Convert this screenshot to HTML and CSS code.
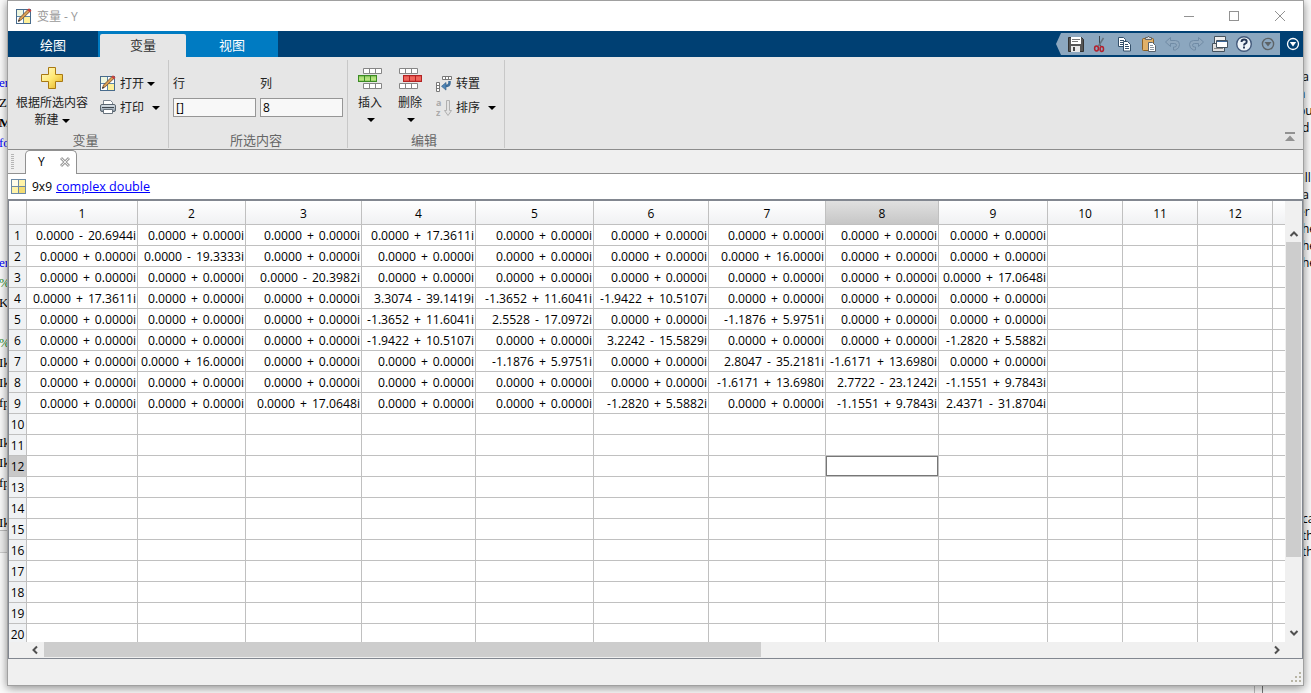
FILE: index.html
```html
<!DOCTYPE html>
<html lang="zh-CN">
<head>
  <meta charset="UTF-8">
  <title>变量 - Y</title>
  <link rel="stylesheet" href="styles.css">
</head>
<body>

  <!-- shared icons -->
  <svg class="defs" width="0" height="0">
    <defs>
      <linearGradient id="gold" x1="0" y1="0" x2="1" y2="1">
        <stop offset="0" stop-color="#fffbd0"/><stop offset="0.5" stop-color="#ffe873"/><stop offset="1" stop-color="#dfa91c"/>
      </linearGradient>
      <linearGradient id="green" x1="0" y1="0" x2="0" y2="1">
        <stop offset="0" stop-color="#9fd36d"/><stop offset="1" stop-color="#c4ef8a"/>
      </linearGradient>
      <linearGradient id="metal" x1="0" y1="0" x2="0" y2="1">
        <stop offset="0" stop-color="#dfe7ee"/><stop offset="1" stop-color="#8795a2"/>
      </linearGradient>
      <symbol id="edit" viewBox="0 0 16 16">
        <rect x="0.5" y="1.5" width="14" height="14" fill="#fff" stroke="#486b8c"/>
        <rect x="8" y="9" width="6" height="6" fill="#fff099"/>
        <rect x="1" y="2" width="6" height="6" fill="#eef6df"/>
        <path d="M7.5 2v13M1 8.5h13" stroke="#5c86a8"/>
        <path d="M2.500 13.200l1-3.200L12 1.500l2 1.900-8.700 8.400z" fill="#d9a054" stroke="#6b4423" stroke-width="0.8"/>
        <path d="M11.400 2l1.600-1.700 2.500 2.400L13.900 4.300z" fill="#c9423f"/>
        <path d="M2 13.800l.8-2 1.400 1.300z" fill="#222"/>
      </symbol>
      <symbol id="cells" viewBox="0 0 19 6" preserveAspectRatio="none">
        <path d="M.5.5h18v5H.5z"/><path d="M6.500 0v6M12.500 0v6" fill="none"/>
      </symbol>
    </defs>
  </svg>

  <div class="code">
    <p class="blue">er</p><p>Z=</p><p><b>M</b>=</p><p class="blue">fo</p><p></p><p></p><p></p><p></p><p></p>
    <p class="blue">er</p><p class="green">%2</p><p>K=</p><p></p><p class="green">%</p><p>Ik</p><p>Ik</p><p>fp</p><p></p><p>Ik</p><p>Ik</p><p>fp</p><p></p><p>Ik</p>
    <div class="code-end"></div>
  </div>
  <div class="notes">
    <p>ta</p><p>n</p><p>bu</p><p class="in">d</p><p></p><p></p><p>all</p><p>ta</p><p>er</p><p class="in">he</p><p class="in">he</p><p class="in">he</p>
    <div class="notes-gap"></div>
    <p class="in">ca</p><p class="in">th</p><p class="in">th</p>
  </div>
  <div class="split"></div>

  <div class="window">
    <div class="titlebar">
      <svg width="16" height="16"><use href="#edit"/></svg>
      <span class="title">变量 - Y</span>
      <svg class="caption" width="104" height="14" fill="none" stroke="#929292">
        <path d="M1 7.500h10"/><rect x="46.500" y="2.500" width="9" height="9"/><path d="M92 2l10 10M102 2l-10 10"/>
      </svg>
    </div>

    <div class="tabs">
      <div class="tab">绘图</div>
      <div class="tab-blue">
        <div class="tab active">变量</div>
        <div class="tab view">视图</div>
      </div>
      <div class="quick">
        <svg width="224" height="22" viewBox="0 0 224 22">
          <path d="M5 0h219v22H5L0 11z" fill="#8ca7bf"/>
          <!-- save -->
          <g transform="translate(12,3)">
            <path d="M.5 1.500h13l2 2v12H.5z" fill="#555" stroke="#333"/>
            <rect x="3" y="1" width="10" height="7" fill="#fff"/><path d="M4 3.500h8M4 5.500h6" stroke="#777"/>
            <rect x="3" y="10" width="9" height="6" fill="#e8e8e8"/><rect x="5" y="11" width="2" height="4" fill="#444"/>
          </g>
          <!-- cut -->
          <g transform="translate(36,3)" fill="none">
            <path d="M7.500 0v8l1 2" stroke="#3c4750"/><path d="M11.500 2l-5 8" stroke="#66737e" stroke-width="1.500"/>
            <ellipse cx="4.500" cy="12.500" rx="1.900" ry="2.500" stroke="#b3202d" stroke-width="1.500"/>
            <ellipse cx="9.800" cy="13" rx="1.700" ry="2.500" stroke="#b3202d" stroke-width="1.500"/>
          </g>
          <!-- copy -->
          <g transform="translate(61,3)" stroke="#34506b">
            <path d="M1.500 1.500h5l2 2v7h-7z" fill="#fff"/><path d="M3 4.500h4M3 6.500h4M3 8.500h4"/>
            <path d="M6.500 5.500h4l3 3v6.500h-7z" fill="#fff"/><path d="M8 8.500h3M8 10.500h4M8 12.500h4"/>
          </g>
          <!-- paste -->
          <g transform="translate(85,3)">
            <rect x="1.500" y="2.500" width="11" height="12" rx="1" fill="#e0b169" stroke="#8c6124"/>
            <path d="M4.500 3.500v-2h2l.5-1h1l.5 1h2v2z" fill="#ddd" stroke="#666"/>
            <path d="M7.500 6.500h4l3 3v6h-7z" fill="#fff" stroke="#58636e"/><path d="M9 9.500h3M9 11.500h4M9 13.500h4" stroke="#8b96a2"/>
          </g>
          <!-- undo / redo -->
          <path d="M109.500 9l5-4.500v3h5q4 0 4 4t-4 5.500h-2v-3h1q2 0 2-1.700t-2-1.800h-4v3z" fill="#90a8be" stroke="#708ba5"/>
          <path d="M147.500 9l-5-4.500v3h-5q-4 0-4 4t4 5.500h2v-3h-1q-2 0-2-1.700t2-1.800h4v3z" fill="#90a8be" stroke="#708ba5"/>
          <!-- switch window -->
          <g transform="translate(156,3)" stroke="#44525e">
            <path d="M2.500.5h11v7h-11z" fill="#eee"/><path d="M.5 7.500h12v8H.5z" fill="#ddd"/><path d="M2 12.500h9" stroke="#888"/>
            <path d="M4.500 4.500h11v7h-11z" fill="#fff"/><path d="M5 5.500h10" stroke="#3b6698"/>
          </g>
          <!-- help -->
          <circle cx="188" cy="11" r="7.300" fill="#eef4f8" stroke="#42597b" stroke-width="1.400"/>
          <path d="M185.500 9q0-2.500 2.600-2.500t2.600 2.200q0 1.300-1.500 2-1.200.6-1.200 1.800M188 13.500v2" fill="none" stroke="#243654" stroke-width="1.900"/>
          <circle cx="212" cy="11" r="5.600" fill="none" stroke="#5d6367" stroke-width="1.400"/><path d="M208.500 9h7l-3.500 4.500z" fill="#5d6367"/>
        </svg>
        <svg width="14" height="14"><circle cx="7" cy="7" r="5.500" fill="none" stroke="#fff" stroke-width="1.300"/><path d="M3.800 5h6.400L7 9.500z" fill="#fff"/></svg>
      </div>
    </div>

    <div class="ribbon">
      <div class="group g-var">
        <div class="controls">
          <div class="big new">
            <svg width="24" height="24"><path d="M8.500 1.500h7v7h7v7h-7v7h-7v-7h-7v-7h7z" fill="url(#gold)" stroke="#a87812"/></svg>
            <span>根据所选内容</span>
            <span>新建<i class="arrow"></i></span>
          </div>
          <div class="stack">
            <div class="item"><svg width="16" height="16"><use href="#edit"/></svg>打开<i class="arrow"></i></div>
            <div class="item">
              <svg width="16" height="16">
                <path d="M3.500 6V1.500h7l2 2V6" fill="#fff" stroke="#7a8590"/>
                <rect x=".5" y="5.500" width="15" height="7" rx="1.500" fill="url(#metal)" stroke="#59656f"/>
                <path d="M2 8.500h12" stroke="#3d464e"/><path d="M3.500 10.500h9v4h-9z" fill="#fff" stroke="#68737d"/>
              </svg>打印<i class="arrow wide"></i>
            </div>
          </div>
        </div>
        <div class="caption-text">变量</div>
      </div>
      <div class="group g-sel">
        <div class="controls fields">
          <label>行<input type="text" value="[]"></label>
          <label>列<input type="text" value="8"></label>
        </div>
        <div class="caption-text">所选内容</div>
      </div>
      <div class="group g-edit">
        <div class="controls">
          <div class="big">
            <svg width="26" height="24" fill="#fff" stroke="#858585">
              <use href="#cells" x="6" y="1" width="19" height="6"/>
              <use href="#cells" x="1" y="8" width="19" height="7" fill="url(#green)" stroke="#3d8c24"/>
              <use href="#cells" x="6" y="16" width="19" height="6"/>
            </svg>
            <span>插入</span><i class="arrow"></i>
          </div>
          <div class="big">
            <svg width="26" height="24" fill="#fff" stroke="#858585">
              <use href="#cells" x="2" y="1" width="19" height="6"/>
              <use href="#cells" x="6" y="8" width="19" height="7" fill="#f0655c" stroke="#b32323"/>
              <use href="#cells" x="2" y="16" width="19" height="6"/>
            </svg>
            <span>删除</span><i class="arrow"></i>
          </div>
          <div class="stack">
            <div class="item">
              <svg width="16" height="16">
                <path d="M6.500.5h9v3h-9zM9.500.5v3M12.500.5v3M.5 6.500h3v9h-3zM.5 9.500h3M.5 12.500h3" fill="#fff" stroke="#777"/>
                <path d="M13.500 5v2q0 3-4 3" fill="none" stroke="#3f6f9c" stroke-width="2.500"/><path d="M5.500 10.300L10 6.500v7.600z" fill="#4f86b8" stroke="#2e5880" stroke-width=".6"/>
              </svg>转置
            </div>
            <div class="item">
              <svg width="16" height="16">
                <text x="0" y="6" class="az">a</text><text x="0" y="15.500" class="az">z</text>
                <path d="M10.500.5h3v10h2l-3.500 5-3.500-5h2z" fill="#e3e3e3" stroke="#b0b0b0"/>
              </svg>排序<i class="arrow wide"></i>
            </div>
          </div>
        </div>
        <div class="caption-text">编辑</div>
      </div>
      <svg class="collapse" width="12" height="12"><path d="M1 1h10v2H1zM6 4.500l5 5.500H1z" fill="#929292"/></svg>
    </div>

    <div class="docbar">
      <div class="grip"></div>
      <div class="doc-tab">Y
        <svg width="12" height="12"><path d="M2 2l8 8M10 2l-8 8" stroke="#a2a2a2" stroke-width="3"/><path d="M2.500 2.500l7 7M9.500 2.500l-7 7" stroke="#eee"/></svg>
      </div>
    </div>

    <div class="info">
      <svg width="16" height="16"><rect x=".5" y=".5" width="14" height="14" fill="#fff3a8" stroke="#6c8aa6"/><path d="M1 1h6v6H1z" fill="#fffce9"/><path d="M8 8h6v6H8z" fill="#f3dc72"/><path d="M7.500 1v13M1 7.500h13" stroke="#6c8aa6"/></svg>
      <span>9x9</span><a href="#">complex double</a>
    </div>

    <div class="sheet">
      <div class="grid">
        <table>
          <colgroup id="cols"></colgroup>
          <thead><tr id="head"></tr></thead>
          <tbody id="body"></tbody>
        </table>
      </div>
      <div class="vscroll">
        <svg width="10" height="8"><path d="M1.500 6L5 2.500 8.500 6" /></svg>
        <div class="vthumb"></div>
        <svg width="10" height="8"><path d="M1.500 2L5 5.500 8.500 2" /></svg>
      </div>
      <div class="hscroll">
        <svg width="8" height="10"><path d="M6 1.500L2.500 5 6 8.500" /></svg>
        <div class="hthumb"></div>
        <svg width="8" height="10"><path d="M2 1.500L5.500 5 2 8.500" /></svg>
      </div>
    </div>

    <div class="status">
      <svg width="12" height="12" fill="#b8b5a5"><path d="M9 0h2v2H9zM5 4h2v2H5zM9 4h2v2H9zM1 8h2v2H1zM5 8h2v2H5zM9 8h2v2H9z"/></svg>
    </div>
  </div>

  <script>
    const widths = [18, 111, 108, 116, 114, 118, 115, 117, 113, 109, 75, 75, 75, 13];
    const ROWS = 20;
    const SELECTED = { row: 12, col: 8 };
    const ZERO = '0.0000 + 0.0000i';

    // non-zero entries, "row,col"
    const Y = {
      '1,1': '0.0000 - 20.6944i', '1,4': '0.0000 + 17.3611i',
      '2,2': '0.0000 - 19.3333i', '2,7': '0.0000 + 16.0000i',
      '3,3': '0.0000 - 20.3982i', '3,9': '0.0000 + 17.0648i',
      '4,1': '0.0000 + 17.3611i', '4,4': '3.3074 - 39.1419i', '4,5': '-1.3652 + 11.6041i', '4,6': '-1.9422 + 10.5107i',
      '5,4': '-1.3652 + 11.6041i', '5,5': '2.5528 - 17.0972i', '5,7': '-1.1876 + 5.9751i',
      '6,4': '-1.9422 + 10.5107i', '6,6': '3.2242 - 15.5829i', '6,9': '-1.2820 + 5.5882i',
      '7,2': '0.0000 + 16.0000i', '7,5': '-1.1876 + 5.9751i', '7,7': '2.8047 - 35.2181i', '7,8': '-1.6171 + 13.6980i',
      '8,7': '-1.6171 + 13.6980i', '8,8': '2.7722 - 23.1242i', '8,9': '-1.1551 + 9.7843i',
      '9,3': '0.0000 + 17.0648i', '9,6': '-1.2820 + 5.5882i', '9,8': '-1.1551 + 9.7843i', '9,9': '2.4371 - 31.8704i'
    };

    document.getElementById('cols').innerHTML = widths.map(w => `<col style="width:${w}px">`).join('');

    let head = '';
    for (let c = 0; c < widths.length; c++) {
      const label = c > 0 && c < 13 ? c : '';
      head += `<th class="${c === SELECTED.col ? 'picked' : ''}">${label}</th>`;
    }
    document.getElementById('head').innerHTML = head;

    let body = '';
    for (let r = 1; r <= ROWS; r++) {
      body += `<tr><th class="${r === SELECTED.row ? 'picked' : ''}">${r}</th>`;
      for (let c = 1; c < widths.length; c++) {
        const value = r <= 9 && c <= 9 ? (Y[r + ',' + c] || ZERO) : '';
        const cls = r === SELECTED.row && c === SELECTED.col ? ' class="focus"' : '';
        body += `<td${cls}>${value}</td>`;
      }
      body += '</tr>';
    }
    document.getElementById('body').innerHTML = body;
  </script>

</body>
</html>
```
FILE: styles.css
```css
* {
  box-sizing: border-box;
}

body {
  position: relative;
  margin: 0;
  width: 1311px;
  height: 693px;
  overflow: hidden;
  background: #fbfbfb;
  color: #000;
  font-family: "Open Sans", "Noto Sans CJK SC", sans-serif;
  font-size: 12px;
}

svg {
  display: block;
  flex: none;
}

.defs {
  position: absolute;
}

p {
  margin: 0;
}

/* editor and notes behind the window */
.code {
  position: absolute;
  left: 0;
  top: 73px;
  width: 8px;
  overflow: hidden;
  font-family: "Liberation Serif", "Noto Sans CJK SC", serif;
  font-size: 13px;
}

.code p {
  height: 20px;
  margin-left: -1px;
  line-height: 20px;
  white-space: nowrap;
}

.code .blue {
  color: #00f;
}

.code .green {
  color: #228b22;
}

.code-end {
  height: 23px;
  margin-top: -3px;
  border-top: 1px solid #bbb;
  border-bottom: 1px solid #ccc;
  background: #eee;
}

.notes {
  position: absolute;
  left: 1298px;
  top: 68px;
  width: 18px;
}

.notes p {
  height: 16.9px;
  line-height: 17px;
  white-space: nowrap;
}

.notes .in {
  padding-left: 4px;
}

.notes-gap {
  height: 239px;
}

.split {
  position: absolute;
  left: 1254px;
  top: 680px;
  width: 9px;
  height: 13px;
  border-left: 1px solid #bbb;
  border-right: 1px solid #777;
}

.window {
  position: absolute;
  left: 7px;
  top: 0;
  width: 1297px;
  height: 686px;
  display: flex;
  flex-direction: column;
  border: 1px solid #a0a0a0;
  background: #f0f0f0;
  box-shadow: 0 2px 9px rgba(0, 0, 0, 0.45);
}

.titlebar {
  height: 30px;
  display: flex;
  align-items: center;
  padding: 0 16px 1px 8px;
  background: #fff;
}

.title {
  margin-left: 5px;
  color: #999;
}

.caption {
  margin-left: auto;
}

/* toolstrip tabs */
.tabs {
  height: 26px;
  display: flex;
  background: #004073;
  color: #fff;
  font-size: 13px;
}

.tab {
  width: 90px;
  line-height: 29px;
  text-align: center;
}

.tab-blue {
  display: flex;
  width: 180px;
  padding: 3px 0 0 2px;
  background: #007bc2;
}

.active {
  width: 86px;
  height: 23px;
  line-height: 23px;
  border-radius: 2px 2px 0 0;
  background: #e6e6e6;
  color: #333;
}

.view {
  width: 92px;
  line-height: 23px;
}

.quick {
  display: flex;
  align-items: center;
  gap: 6px;
  margin-left: auto;
  padding-right: 3px;
}

.ribbon {
  height: 93px;
  display: flex;
  padding-top: 3px;
  border-bottom: 1px solid #8c8c8c;
  background: #e6e6e6;
  color: #222;
}

.group {
  height: 88px;
  border-right: 1px solid #c8c8c8;
}

.g-var {
  width: 161px;
}

.g-sel {
  width: 179px;
}

.g-edit {
  width: 157px;
}

.controls {
  height: 72px;
  display: flex;
  padding-top: 6px;
}

.caption-text {
  height: 16px;
  line-height: 16px;
  text-align: center;
  color: #666;
  font-size: 13px;
}

.g-var .caption-text {
  padding-right: 5px;
}

.g-sel .caption-text,
.g-edit .caption-text {
  padding-right: 4px;
}

.big {
  width: 40px;
  display: flex;
  flex-direction: column;
  align-items: center;
  line-height: 17px;
}

.big span {
  margin-top: 4px;
}

.big span + span {
  margin-top: 0;
}

.big > .arrow {
  margin: 7px 0 0 2px;
}

.g-edit .big svg {
  margin-top: 1px;
}

.g-edit .big span {
  margin-top: 3px;
}

.g-edit .big:first-child {
  margin-left: 2px;
}

.new {
  width: 88px;
}

.arrow {
  display: inline-block;
  margin-left: 3px;
  border: 4px solid transparent;
  border-top-color: #000;
  border-bottom: 0;
  vertical-align: 1px;
}

.wide {
  margin-left: 8px;
}

.stack {
  padding: 10px 0 0 4px;
}

.g-edit .stack {
  padding-left: 6px;
}

.item {
  height: 24px;
  display: flex;
  align-items: flex-start;
  line-height: 16px;
}

.item svg {
  margin: -1px 4px 0 0;
}

.g-edit .item svg {
  margin-top: 0;
}

.item .arrow {
  margin-top: 6px;
}

.az {
  fill: #aaa;
  font: bold 9px "Open Sans", sans-serif;
}

.fields {
  gap: 4px;
  padding: 15px 0 0 4px;
}

.fields label {
  line-height: 18px;
}

.fields input {
  display: block;
  width: 83px;
  height: 19px;
  margin-top: 5px;
  padding: 0 2px;
  border: 1px solid #969696;
  background: #f8f8f8;
  font: 12px "Open Sans", sans-serif;
}

.collapse {
  margin: 71px 7px 0 auto;
}

/* document tab */
.docbar {
  height: 24px;
  display: flex;
  border-bottom: 1px solid #919191;
  background: #f0f0f0;
}

.grip {
  width: 3px;
  height: 16px;
  margin: 4px 11px 0 3px;
  background: repeating-linear-gradient(#b5b5b5 0 1px, transparent 1px 2px);
}

.doc-tab {
  width: 52px;
  height: 24px;
  display: flex;
  align-items: center;
  justify-content: space-between;
  padding: 0 5px 2px 12px;
  border: 1px solid #919191;
  border-bottom: 0;
  border-radius: 5px 5px 0 0;
  background: #fff;
}

.info {
  height: 25px;
  display: flex;
  align-items: center;
  padding-left: 3px;
  background: #fff;
}

.info span {
  margin: 0 4px 0 5px;
}

.info a {
  color: #00f;
  font-size: 12.6px;
}

/* variable grid */
.sheet {
  height: 460px;
  display: grid;
  grid-template-columns: 1277px 16px;
  grid-template-rows: 441px 16px;
  border: 1px solid #828790;
  border-top-width: 2px;
  background: #f0f0f0;
}

.grid {
  width: 1276px;
  overflow: hidden;
  background: #fff;
}

table {
  width: 1277px;
  table-layout: fixed;
  border-collapse: separate;
  border-spacing: 0;
}

th,
td {
  height: 21px;
  padding: 2px 0 0;
  border: solid #c0c0c0;
  border-width: 0 1px 1px 0;
  line-height: 18px;
  font-weight: normal;
  white-space: nowrap;
}

td {
  padding-right: 1px;
  text-align: right;
  font-size: 12.2px;
  word-spacing: 1.8px;
}

th {
  background: #f0f2f4;
}

thead th {
  height: 24px;
  line-height: 21px;
  background: linear-gradient(#fff, #f0f1f3);
}

th:last-child,
td:last-child {
  border-right: 0;
}

th.picked {
  background: #c8c8c8;
}

thead th.picked {
  background: linear-gradient(#e0e0e0, #c6c6c6);
}

td.focus {
  box-shadow: inset 0 0 0 1px #777;
}

.vscroll,
.hscroll {
  display: flex;
  align-items: center;
}

.vscroll {
  flex-direction: column;
  justify-content: space-between;
  padding: 29px 1px 5px 0;
}

.hscroll {
  padding: 0 5px 0 22px;
}

.vscroll path,
.hscroll path {
  fill: none;
  stroke: #505050;
  stroke-width: 2;
}

.vthumb {
  width: 15px;
  height: 315px;
  margin: 4px 0 auto;
  background: #cdcdcd;
}

.hthumb {
  width: 717px;
  height: 15px;
  margin: 0 auto 1px 5px;
  background: #cdcdcd;
}

.status {
  flex: 1;
  display: flex;
  align-items: flex-end;
  justify-content: flex-end;
  padding: 0 1px 1px 0;
}
```
